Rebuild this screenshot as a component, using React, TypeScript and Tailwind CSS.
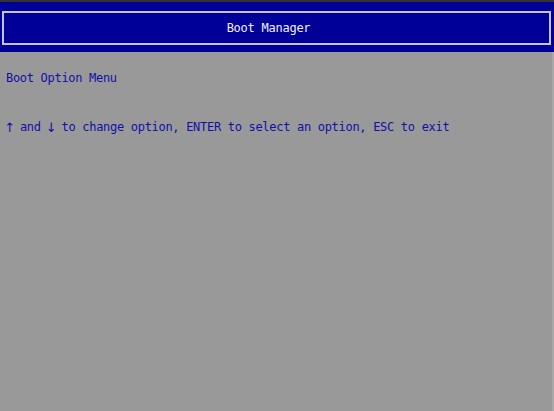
import React from "react";

const mono = { fontFamily: '"DejaVu Sans Mono", "Liberation Mono", monospace' };

// Arrow glyphs in the mono font are tiny; draw them in a taller face but keep one cell wide
const Arrow: React.FC<{ ch: string }> = ({ ch }) => (
  <span className="inline-flex w-[7px] justify-center overflow-visible align-[-1px]">
    <span
      className="text-[13px] leading-[13px]"
      style={{ fontFamily: '"DejaVu Sans", sans-serif' }}
    >
      {ch}
    </span>
  </span>
);

const App: React.FC = () => {
  return (
    <div
      className="w-[554px] h-[411px] flex flex-col bg-[#999999] border-t-2 border-[#333333] overflow-hidden"
      style={mono}
    >
      {/* Title bar */}
      <div className="flex bg-[#000098] h-[50px] pl-[2px] pr-[3px] pt-[9px] pb-[7px]">
        <div className="flex-1 flex items-center justify-center pr-[16px] border-2 border-[#c4c4ec] text-[12px] leading-4 tracking-[-0.25px] text-[#f0f0ff]">
          Boot Manager
        </div>
      </div>

      {/* Body */}
      <div className="flex-1 flex">
        <div className="flex-1 flex flex-col pl-[6px] pt-[18px] text-[12px] leading-4 tracking-[-0.3px] text-[#1010a8]">
          <div>Boot Option Menu</div>
          <div className="mt-[33px] whitespace-nowrap">
            <Arrow ch="↑" /> and <Arrow ch="↓" /> to change option, ENTER to select an option, ESC to exit
          </div>
        </div>
        <div className="w-[2px] bg-[#a8a8a8]" />
      </div>
    </div>
  );
};

export default App;
